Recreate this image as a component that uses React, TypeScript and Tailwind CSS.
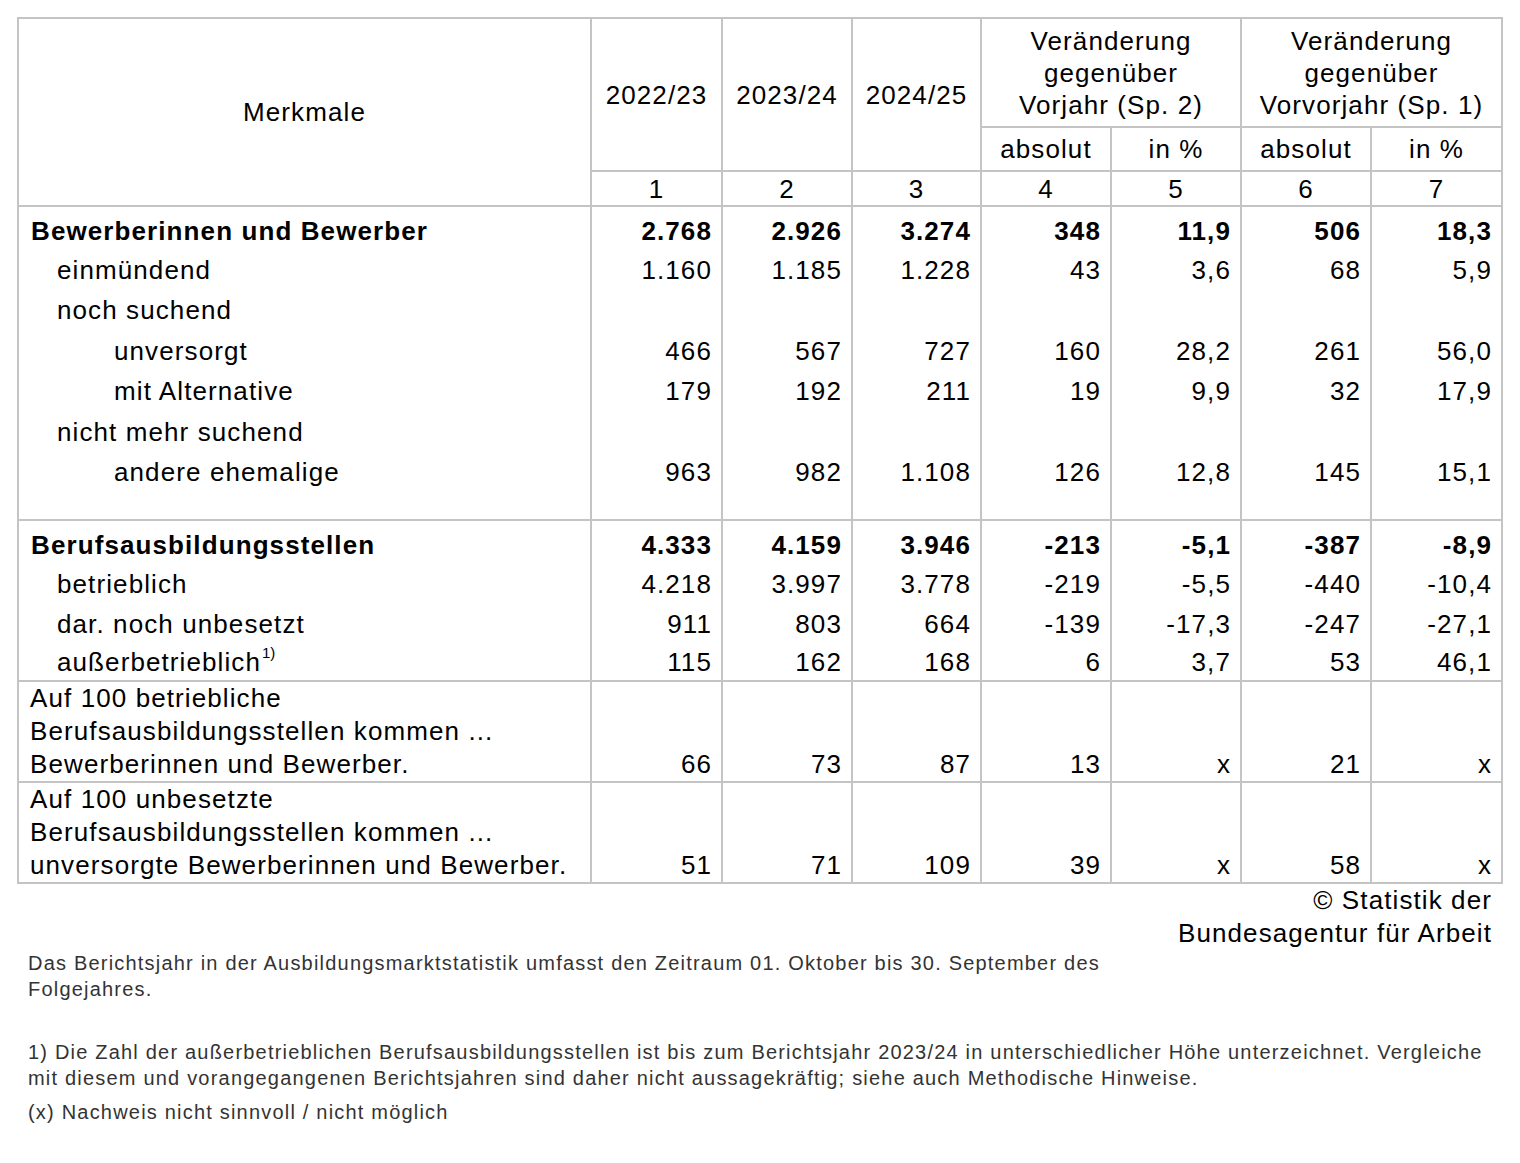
import React from "react";

type Row = {
  label: string;
  level: 0 | 1 | 2;
  bold?: boolean;
  sup?: string;
  values: string[];
};

const bewerber: Row[] = [
  { label: "Bewerberinnen und Bewerber", level: 0, bold: true, values: ["2.768", "2.926", "3.274", "348", "11,9", "506", "18,3"] },
  { label: "einmündend", level: 1, values: ["1.160", "1.185", "1.228", "43", "3,6", "68", "5,9"] },
  { label: "noch suchend", level: 1, values: ["", "", "", "", "", "", ""] },
  { label: "unversorgt", level: 2, values: ["466", "567", "727", "160", "28,2", "261", "56,0"] },
  { label: "mit Alternative", level: 2, values: ["179", "192", "211", "19", "9,9", "32", "17,9"] },
  { label: "nicht mehr suchend", level: 1, values: ["", "", "", "", "", "", ""] },
  { label: "andere ehemalige", level: 2, values: ["963", "982", "1.108", "126", "12,8", "145", "15,1"] },
];

const stellen: Row[] = [
  { label: "Berufsausbildungsstellen", level: 0, bold: true, values: ["4.333", "4.159", "3.946", "-213", "-5,1", "-387", "-8,9"] },
  { label: "betrieblich", level: 1, values: ["4.218", "3.997", "3.778", "-219", "-5,5", "-440", "-10,4"] },
  { label: "dar. noch unbesetzt", level: 1, values: ["911", "803", "664", "-139", "-17,3", "-247", "-27,1"] },
  { label: "außerbetrieblich", level: 1, sup: "1)", values: ["115", "162", "168", "6", "3,7", "53", "46,1"] },
];

const quoten = [
  {
    lines: ["Auf 100 betriebliche", "Berufsausbildungsstellen kommen ...", "Bewerberinnen und Bewerber."],
    values: ["66", "73", "87", "13", "x", "21", "x"],
  },
  {
    lines: ["Auf 100 unbesetzte", "Berufsausbildungsstellen kommen ...", "unversorgte Bewerberinnen und Bewerber."],
    values: ["51", "71", "109", "39", "x", "58", "x"],
  },
];

const indent = ["pl-[12px]", "pl-[38px]", "pl-[95px]"];

const line = "border-[#c4c4c4]";

function DataRows({ rows, heights }: { rows: Row[]; heights: string[] }) {
  return (
    <>
      {rows.map((r, i) => (
        <tr key={r.label} className={heights[i]}>
          <td className={`border-x-2 ${line} ${indent[r.level]} ${r.bold ? "font-bold" : ""} ${i === 0 ? "pt-[4px]" : ""} whitespace-nowrap`}>
            {r.label}
            {r.sup && <sup className="text-[15px] tracking-normal align-[6px] ml-[1px]">{r.sup}</sup>}
          </td>
          {r.values.map((v, j) => (
            <td key={j} className={`border-x-2 ${line} text-right pr-[9px] ${r.bold ? "font-bold" : ""} ${i === 0 ? "pt-[4px]" : ""}`}>
              {v}
            </td>
          ))}
        </tr>
      ))}
    </>
  );
}

export default function App() {
  return (
    <div className="min-h-screen bg-white pt-[17px] pl-[17px] text-black font-['Liberation_Sans',Arial,sans-serif]">
      <div className="w-[1484px]">
        <table className="table-fixed border-collapse w-[1484px] text-[26px] tracking-[1.1px] leading-[32px]">
          <colgroup>
            <col className="w-[573px]" />
            <col className="w-[131px]" />
            <col className="w-[130px]" />
            <col className="w-[129px]" />
            <col className="w-[130px]" />
            <col className="w-[130px]" />
            <col className="w-[130px]" />
            <col className="w-[131px]" />
          </colgroup>
          <thead className="font-normal">
            <tr className="h-[109px]">
              <th rowSpan={3} className={`border-2 ${line} font-normal text-center align-middle`}>
                Merkmale
              </th>
              <th rowSpan={2} className={`border-2 ${line} font-normal text-center`}>2022/23</th>
              <th rowSpan={2} className={`border-2 ${line} font-normal text-center`}>2023/24</th>
              <th rowSpan={2} className={`border-2 ${line} font-normal text-center`}>2024/25</th>
              <th colSpan={2} className={`border-2 ${line} font-normal text-center`}>
                Veränderung
                <br />
                gegenüber
                <br />
                Vorjahr (Sp. 2)
              </th>
              <th colSpan={2} className={`border-2 ${line} font-normal text-center`}>
                Veränderung
                <br />
                gegenüber
                <br />
                Vorvorjahr (Sp. 1)
              </th>
            </tr>
            <tr className="h-[44px]">
              <th className={`border-2 ${line} font-normal`}>absolut</th>
              <th className={`border-2 ${line} font-normal`}>in %</th>
              <th className={`border-2 ${line} font-normal`}>absolut</th>
              <th className={`border-2 ${line} font-normal`}>in %</th>
            </tr>
            <tr className="h-[35px]">
              {["1", "2", "3", "4", "5", "6", "7"].map((n) => (
                <th key={n} className={`border-2 ${line} font-normal`}>
                  {n}
                </th>
              ))}
            </tr>
          </thead>
          <tbody className={`border-y-2 ${line}`}>
            <DataRows rows={bewerber} heights={["h-[44px]", "h-[40px]", "h-[40px]", "h-[41px]", "h-[40px]", "h-[41px]", "h-[40px]"]} />
            <tr className="h-[28px]">
              {Array.from({ length: 8 }).map((_, j) => (
                <td key={j} className={`border-x-2 ${line}`} />
              ))}
            </tr>
          </tbody>
          <tbody className={`border-y-2 ${line}`}>
            <DataRows rows={stellen} heights={["h-[44px]", "h-[40px]", "h-[40px]", "h-[37px]"]} />
          </tbody>
          {quoten.map((q, i) => (
            <tbody key={i} className={`border-y-2 ${line}`}>
              <tr className="h-[99px] leading-[33px]">
                <td className={`border-x-2 ${line} pl-[11px] align-bottom whitespace-nowrap`}>
                  {q.lines.map((l) => (
                    <div key={l}>{l}</div>
                  ))}
                </td>
                {q.values.map((v, j) => (
                  <td key={j} className={`border-x-2 ${line} text-right pr-[9px] align-bottom`}>
                    {v}
                  </td>
                ))}
              </tr>
            </tbody>
          ))}
        </table>

        <div className="text-right pr-[9px] text-[26px] tracking-[1.1px] leading-[33px]">
          <div>© Statistik der</div>
          <div>Bundesagentur für Arbeit</div>
        </div>

        <div className="pl-[11px] text-[20px] tracking-[1.2px] leading-[26px] text-[#333333]">
          <p>
            Das Berichtsjahr in der Ausbildungsmarktstatistik umfasst den Zeitraum 01. Oktober bis 30. September des
            <br />
            Folgejahres.
          </p>
          <p className="mt-[37px]">
            1) Die Zahl der außerbetrieblichen Berufsausbildungsstellen ist bis zum Berichtsjahr 2023/24 in unterschiedlicher Höhe unterzeichnet. Vergleiche
            <br />
            mit diesem und vorangegangenen Berichtsjahren sind daher nicht aussagekräftig; siehe auch Methodische Hinweise.
          </p>
          <p className="mt-[8px]">(x) Nachweis nicht sinnvoll / nicht möglich</p>
        </div>
      </div>
    </div>
  );
}
